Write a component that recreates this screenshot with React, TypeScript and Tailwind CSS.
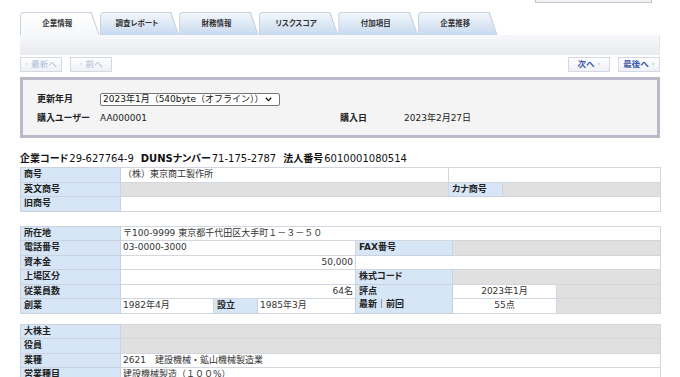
import type { ReactNode } from 'react';

const tabs = ['企業情報', '調査レポート', '財務情報', 'リスクスコア', '付加項目', '企業推移'];

const font = "font-['DejaVu_Sans','Noto_Sans_CJK_JP',sans-serif]";
const palt = "[font-feature-settings:'palt']";

const Th = ({ children, rowSpan, colSpan }: { children?: ReactNode; rowSpan?: number; colSpan?: number }) => (
    <td
        rowSpan={rowSpan}
        colSpan={colSpan}
        className={'h-[14.5px] border border-[#c9d2de] bg-[#d6e6f7] pl-[3px] align-top font-bold leading-[13px] text-[#222] ' + palt}
    >
        {children}
    </td>
);

const Td = ({
    children,
    colSpan,
    rowSpan,
    gray,
    align = 'left',
}: {
    children?: ReactNode;
    colSpan?: number;
    rowSpan?: number;
    gray?: boolean;
    align?: 'left' | 'right' | 'center';
}) => (
    <td
        colSpan={colSpan}
        rowSpan={rowSpan}
        className={
            'h-[14.5px] border border-[#d2d7df] px-[2px] leading-[13px] text-[#333] ' +
            (gray ? 'bg-[#e0e0e0] ' : 'bg-white ') +
            (align === 'right' ? 'text-right' : align === 'center' ? 'text-center' : 'text-left')
        }
    >
        {children}
    </td>
);

const NavButton = ({ label, side, active }: { label: string; side: 'left' | 'right'; active?: boolean }) => (
    <div
        className={
            'flex h-[15px] w-[42px] items-center justify-center gap-[3px] border border-[#d4d8e2] bg-gradient-to-b from-white to-[#eef0f5] text-[8.5px] ' +
            (active ? 'font-bold text-[#3d5aa8]' : 'text-[#aab8d8]')
        }
    >
        {side === 'left' && <span className="text-[7px] text-[#c8cede]">‹</span>}
        <span>{label}</span>
        {side === 'right' && <span className="text-[7px] text-[#b8bece]">›</span>}
    </div>
);

export default function App() {
    return (
        <div className={'h-[377px] w-[680px] overflow-hidden bg-white text-[9px] ' + font}>
            <div className="flex h-[12px] justify-end pr-[28px]">
                <div className="h-[3px] w-[117px] border-x border-b border-[#c4c6d0] bg-[#f2f2f4]" />
            </div>

            <div className="mx-[20px]">
                {/* tabs */}
                <div className="flex h-[23px] items-end">
                    {tabs.map((t, i) => (
                        <div
                            key={t}
                            className="h-[23px] w-[79.6px] rounded-tl-[4px] bg-[#c8d2e0] pt-[1px] pl-[1px] [clip-path:polygon(0_0,calc(100%-8px)_0,100%_100%,0_100%)]"
                        >
                            <div
                                className={
                                    'flex h-full w-full items-center justify-center rounded-tl-[3px] pr-[6px] text-[7.5px] font-bold text-[#333] [clip-path:polygon(0_0,calc(100%-9px)_0,calc(100%-1px)_100%,0_100%)] ' +
                                    palt +
                                    (i === 0 ? ' bg-gradient-to-b from-white to-[#f7f8fa]' : ' bg-gradient-to-b from-[#f3f7fc] to-[#c8d9ef]')
                                }
                            >
                                {t}
                            </div>
                        </div>
                    ))}
                </div>

                {/* toolbar */}
                <div className="h-[20px] border-r border-[#e2e4ea] bg-gradient-to-b from-[#f7f8fa] to-[#e9ebf0]" />

                <div className="mt-[2px] flex h-[15px] items-center justify-between">
                    <div className="flex gap-[8px]">
                        <NavButton label="最新へ" side="left" />
                        <NavButton label="前へ" side="left" />
                    </div>
                    <div className="flex gap-[8px]">
                        <NavButton label="次へ" side="right" active />
                        <NavButton label="最後へ" side="right" active />
                    </div>
                </div>

                {/* purchase info */}
                <div className="mt-[5px] h-[61px] border-[3px] border-[#b9b9c8] bg-[#f4f4f4] pt-[13px] pl-[14px]">
                    <div className="grid grid-cols-[63px_240px_64px_1fr] items-center text-[#222]">
                        <div className={'font-bold ' + palt}>更新年月</div>
                        <div className="relative col-span-3 h-[13px] w-[180px]">
                            <select className="h-[13px] w-full appearance-none rounded-[2px] border border-[#767676] bg-white pl-[2px] text-[9px] leading-[11px] text-[#111]">
                                <option>2023年1月（540byte（オフライン））</option>
                            </select>
                            <svg className="pointer-events-none absolute top-[4px] right-[8px]" width="7" height="5" viewBox="0 0 7 5">
                                <path d="M0.8 0.8 L3.5 3.6 L6.2 0.8" fill="none" stroke="#111" strokeWidth="1.3" />
                            </svg>
                        </div>
                        <div className={'mt-[5px] h-[12px] font-bold ' + palt}>購入ユーザー</div>
                        <div className="mt-[5px] h-[12px]">AA000001</div>
                        <div className={'mt-[5px] h-[12px] font-bold ' + palt}>購入日</div>
                        <div className="mt-[5px] h-[12px]">2023年2月27日</div>
                    </div>
                </div>

                {/* codes */}
                <div className="mt-[14px] flex h-[12px] items-center gap-[7px] text-[10px] text-[#111]">
                    <span className="flex gap-[1px]">
                        <b className={palt}>企業コード</b>
                        <span>29-627764-9</span>
                    </span>
                    <span className="flex gap-[1px]">
                        <b className={palt}>DUNSナンバー</b>
                        <span>71-175-2787</span>
                    </span>
                    <span className="flex gap-[1px]">
                        <b className={palt}>法人番号</b>
                        <span>6010001080514</span>
                    </span>
                </div>

                <table className="mt-[3px] w-[640px] table-fixed border-collapse">
                    <colgroup>
                        <col className="w-[100px]" />
                        <col className="w-[328px]" />
                        <col className="w-[54px]" />
                        <col className="w-[158px]" />
                    </colgroup>
                    <tbody>
                        <tr>
                            <Th>商号</Th>
                            <Td>（株）東京商工製作所</Td>
                            <Td colSpan={2} />
                        </tr>
                        <tr>
                            <Th>英文商号</Th>
                            <Td gray />
                            <Th>カナ商号</Th>
                            <Td gray />
                        </tr>
                        <tr>
                            <Th>旧商号</Th>
                            <Td colSpan={3} />
                        </tr>
                    </tbody>
                </table>

                <table className="mt-[14px] w-[640px] table-fixed border-collapse">
                    <colgroup>
                        <col className="w-[100px]" />
                        <col className="w-[93px]" />
                        <col className="w-[44px]" />
                        <col className="w-[98px]" />
                        <col className="w-[97px]" />
                        <col className="w-[104px]" />
                        <col className="w-[104px]" />
                    </colgroup>
                    <tbody>
                        <tr>
                            <Th>所在地</Th>
                            <Td colSpan={6}>〒100-9999 東京都千代田区大手町１－３－５０</Td>
                        </tr>
                        <tr>
                            <Th>電話番号</Th>
                            <Td colSpan={3}>03-0000-3000</Td>
                            <Th>FAX番号</Th>
                            <Td colSpan={2} gray />
                        </tr>
                        <tr>
                            <Th>資本金</Th>
                            <Td colSpan={3} align="right">
                                50,000
                            </Td>
                            <Td colSpan={3} />
                        </tr>
                        <tr>
                            <Th>上場区分</Th>
                            <Td colSpan={3} />
                            <Th>株式コード</Th>
                            <Td colSpan={2} gray />
                        </tr>
                        <tr>
                            <Th>従業員数</Th>
                            <Td colSpan={3} align="right">
                                64名
                            </Td>
                            <Th rowSpan={2}>
                                評点
                                <br />
                                最新｜前回
                            </Th>
                            <Td align="center">2023年1月</Td>
                            <Td gray />
                        </tr>
                        <tr>
                            <Th>創業</Th>
                            <Td>1982年4月</Td>
                            <Th>設立</Th>
                            <Td>1985年3月</Td>
                            <Td align="center">55点</Td>
                            <Td gray />
                        </tr>
                    </tbody>
                </table>

                <table className="mt-[10px] w-[640px] table-fixed border-collapse">
                    <colgroup>
                        <col className="w-[100px]" />
                        <col className="w-[540px]" />
                    </colgroup>
                    <tbody>
                        <tr>
                            <Th>大株主</Th>
                            <Td gray />
                        </tr>
                        <tr>
                            <Th>役員</Th>
                            <Td gray />
                        </tr>
                        <tr>
                            <Th>業種</Th>
                            <Td>2621　建設機械・鉱山機械製造業</Td>
                        </tr>
                        <tr>
                            <Th>営業種目</Th>
                            <Td>建設機械製造（１００%）</Td>
                        </tr>
                    </tbody>
                </table>
            </div>
        </div>
    );
}
